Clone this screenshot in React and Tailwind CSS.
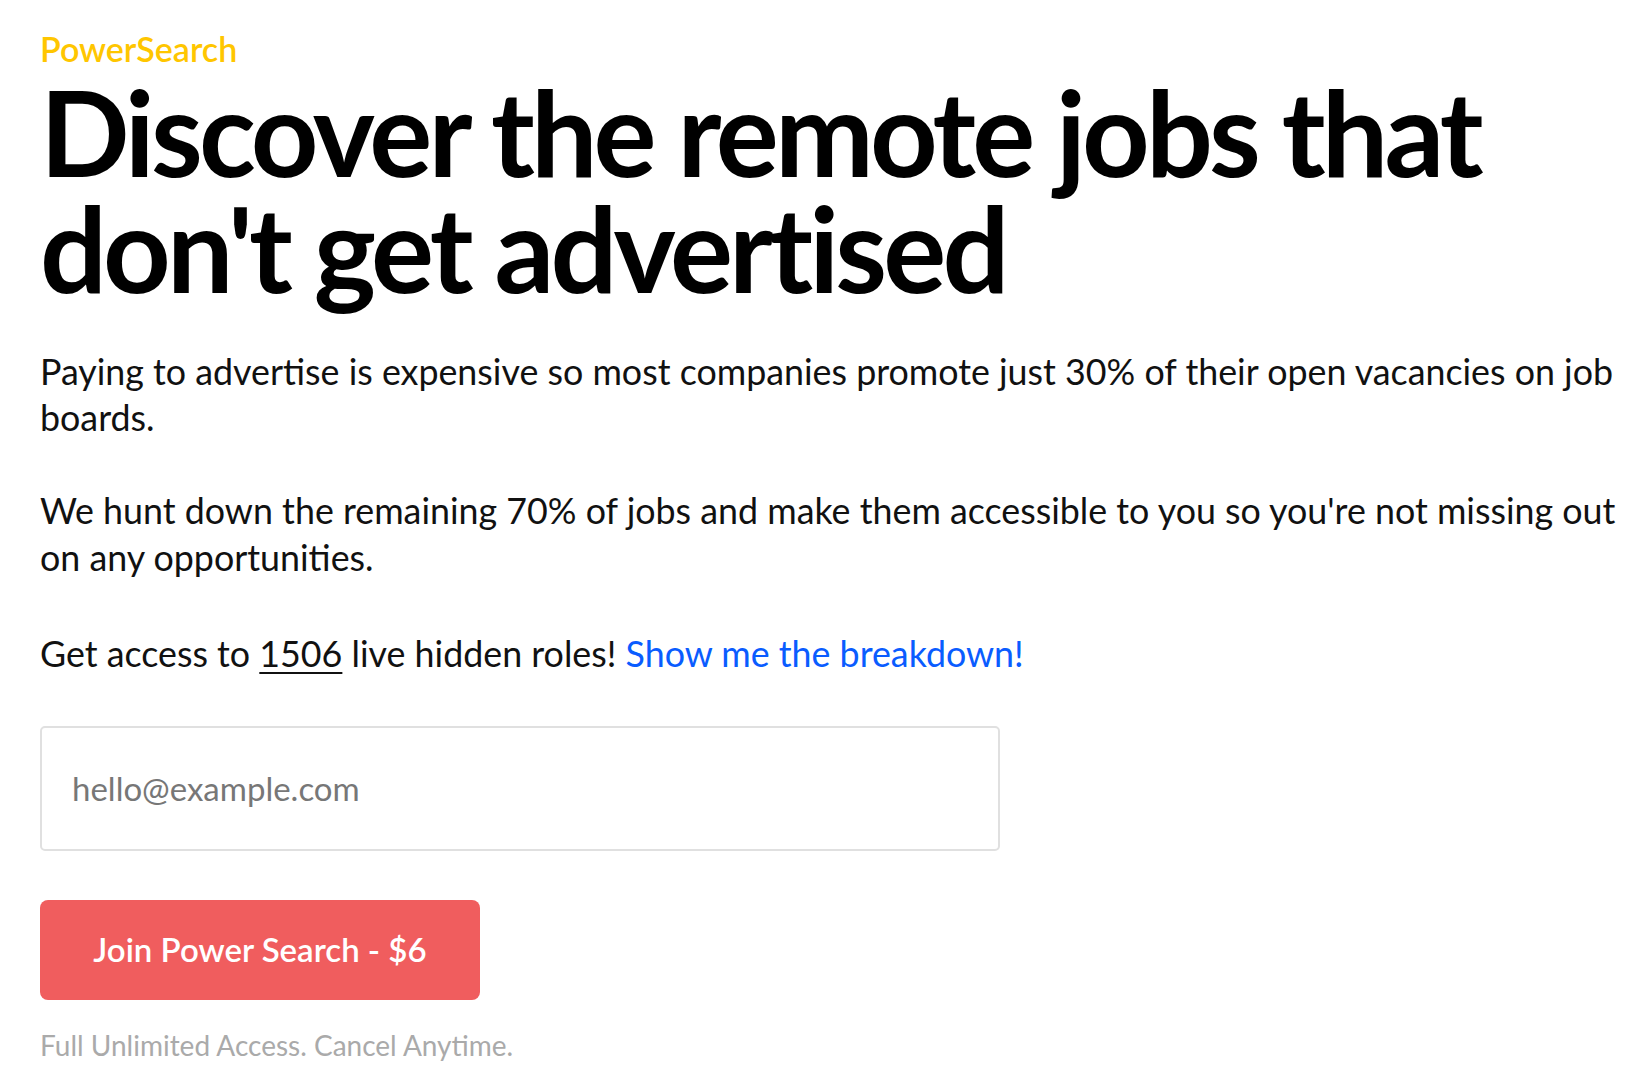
export default function App() {
  return (
    <div className="min-h-screen bg-white text-black pl-10 pt-[29px]" style={{ fontFamily: "Lato, 'Noto Sans', sans-serif" }}>
      <div className="text-[34px] leading-[40px] font-semibold text-[#ffc600]">PowerSearch</div>
      <h1 className="mt-[5px] text-[118px] leading-[116px] font-bold tracking-[-0.033em]">
        Discover the remote jobs that
        <br />
        don't get advertised
      </h1>
      <div className="w-[1595px] text-[35.8px] leading-[46.4px] text-[#111]">
        <p className="mt-[43px]">
          Paying to advertise is expensive so most companies promote just 30% of their open vacancies on job boards.
        </p>
        <p className="mt-[46.5px]">
          We hunt down the remaining 70% of jobs and make them accessible to you so you're not missing out on any opportunities.
        </p>
        <p className="mt-[50px]">
          Get access to <span className="underline underline-offset-[5px] decoration-2">1506</span> live hidden roles!{" "}
          <a href="#" className="text-[#0a5cff]">Show me the breakdown!</a>
        </p>
      </div>
      <input
        type="email"
        placeholder="hello@example.com"
        className="mt-[48px] block w-[960px] h-[125px] rounded-[5px] border-2 border-[#e0e0e0] pl-[30px] text-[33px] text-[#111] placeholder:text-[#777] outline-none"
      />
      <button className="mt-[49px] block w-[440px] h-[100px] rounded-lg bg-[#f05d5e] text-white text-[33px] font-semibold">
        Join Power Search - $6
      </button>
      <div className="mt-[29.5px] text-[28px] leading-[32px] text-[#aaaaaa]">Full Unlimited Access. Cancel Anytime.</div>
    </div>
  );
}
